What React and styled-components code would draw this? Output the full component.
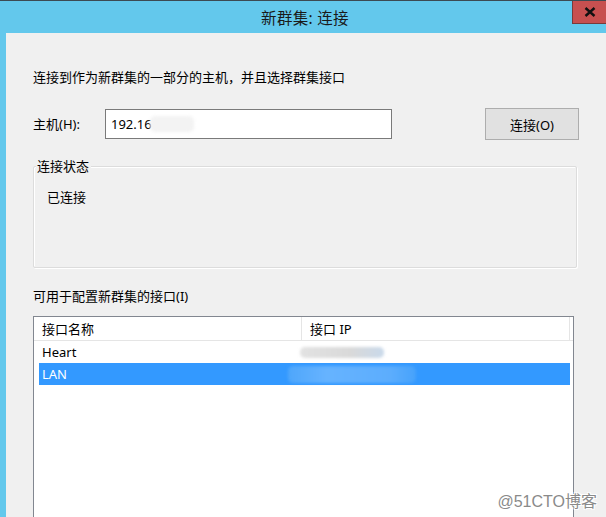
import React from 'react'
import styled, { createGlobalStyle } from 'styled-components'

const GlobalStyle = createGlobalStyle`
  html, body {
    margin: 0;
    padding: 0;
    background: #f0f0f0;
    overflow: hidden;
  }
  body {
    font-family: "Noto Sans", "Noto Sans CJK SC", sans-serif;
    font-size: 13px;
    color: #000;
  }
`

const Window = styled.div`
  width: 606px;
  height: 517px;
  display: flex;
  flex-direction: column;
  background: #63c8ec;
  border-top: 1px solid #3c4a52;
  box-sizing: border-box;
  overflow: hidden;
`

const TitleBar = styled.div`
  position: relative;
  height: 32px;
  flex-shrink: 0;
  display: flex;
  align-items: center;
  justify-content: center;
  padding-left: 4px;
  font-size: 15.5px;
  color: #1a1a1a;
  letter-spacing: 0.3px;
`

const CloseButton = styled.div`
  position: absolute;
  top: -1px;
  right: 0;
  width: 34px;
  height: 24px;
  background: #c75050;
  border-left: 1px solid #7a3a3a;
  border-bottom: 1px solid #7a3a3a;
  box-sizing: border-box;
  display: flex;
  align-items: center;
  justify-content: center;
`

const Body = styled.div`
  flex: 1;
  min-height: 0;
  overflow: hidden;
  margin-left: 6px;
  background: #f0f0f0;
  padding: 0 29px 0 27px;
  display: flex;
  flex-direction: column;
  position: relative;
`

const Line = styled.div`
  line-height: 18px;
  margin-top: ${p => p.$top}px;
  white-space: nowrap;
  flex-shrink: 0;
`

const HostRow = styled.div`
  display: flex;
  align-items: center;
  height: 32px;
  margin-top: 22px;
  flex-shrink: 0;
`

const HostLabel = styled.div`
  width: 72px;
  line-height: 18px;
`

const Input = styled.div`
  width: 287px;
  height: 30px;
  box-sizing: border-box;
  border: 1px solid #7a7a7a;
  background: #fff;
  display: flex;
  align-items: center;
  padding-left: 5px;
`

const Blur = styled.span`
  display: inline-block;
  width: ${p => p.$w}px;
  height: ${p => p.$h}px;
  margin-left: ${p => p.$ml || 0}px;
  border-radius: 5px;
  background: ${p => p.$bg};
  filter: blur(1.5px);
`

const Button = styled.div`
  margin-left: auto;
  margin-right: -2px;
  width: 94px;
  height: 32px;
  box-sizing: border-box;
  background: #e1e1e1;
  border: 1px solid #adadad;
  display: flex;
  align-items: center;
  justify-content: center;
`

const GroupBox = styled.div`
  position: relative;
  flex-shrink: 0;
  margin-top: 26px;
  height: 102px;
  box-sizing: border-box;
  border: 1px solid #dcdcdc;
  box-shadow: inset 1px 1px 0 #fff, 1px 1px 0 #fff;
  border-radius: 2px;
  padding: 21px 0 0 13px;
  line-height: 18px;
`

const Legend = styled.span`
  position: absolute;
  top: -10px;
  left: 2px;
  padding: 0 2px 0 1px;
  background: #f0f0f0;
  line-height: 18px;
`

const ListView = styled.div`
  margin-top: 11px;
  width: 541px;
  height: 215px;
  flex-shrink: 0;
  box-sizing: border-box;
  border: 1px solid #828790;
  background: #fff;
`

const Header = styled.div`
  display: grid;
  grid-template-columns: 268px 268px;
  height: 24px;
  border-bottom: 1px solid #e5e5e5;
  box-sizing: border-box;
`

const HeaderCell = styled.div`
  display: flex;
  align-items: center;
  padding-left: 8px;
  border-right: 1px solid #e5e5e5;
  line-height: 18px;
`

const Rows = styled.div`
  padding: 0 3px 0 5px;
  display: flex;
  flex-direction: column;
`

const Row = styled.div`
  display: grid;
  grid-template-columns: 263px 1fr;
  height: 22px;
  align-items: center;
  background: ${p => (p.$selected ? '#3399ff' : 'transparent')};
  color: ${p => (p.$selected ? '#fff' : '#000')};
`

const NameCell = styled.div`
  padding-left: 3px;
  line-height: 18px;
`

const IpCell = styled.div`
  display: flex;
  align-items: center;
`

const Watermark = styled.div`
  position: absolute;
  right: 9px;
  bottom: 5px;
  font-size: 16px;
  line-height: 20px;
  color: #8a8a8a;
  text-shadow: 1px 1px 0 #fff, -1px -1px 0 #fff, 1px -1px 0 #fff, -1px 1px 0 #fff;
  font-family: "Liberation Sans", "Noto Sans CJK SC", sans-serif;
`

export default function App() {
  return (
    <>
      <GlobalStyle />
      <Window>
        <TitleBar>
          新群集: 连接
          <CloseButton>
            <svg width="12" height="10" viewBox="0 0 12 10">
              <path d="M1.5 1 L10.5 9 M10.5 1 L1.5 9" stroke="#111" strokeWidth="2.4" />
            </svg>
          </CloseButton>
        </TitleBar>
        <Body>
          <Line $top={35}>连接到作为新群集的一部分的主机，并且选择群集接口</Line>
          <HostRow>
            <HostLabel>主机(H):</HostLabel>
            <Input>
              192.16
              <Blur $w={44} $h={16} $ml={-2} $bg="#f3f3f3" />
            </Input>
            <Button>连接(O)</Button>
          </HostRow>
          <GroupBox>
            <Legend>连接状态</Legend>
            已连接
          </GroupBox>
          <Line $top={19}>可用于配置新群集的接口(I)</Line>
          <ListView>
            <Header>
              <HeaderCell>接口名称</HeaderCell>
              <HeaderCell>接口 IP</HeaderCell>
            </Header>
            <Rows>
              <Row>
                <NameCell>Heart</NameCell>
                <IpCell>
                  <Blur $w={84} $h={11} $ml={-2} $bg="linear-gradient(90deg, #e2e2e2, #d9d9d9 60%, #c9d9ea)" />
                </IpCell>
              </Row>
              <Row $selected>
                <NameCell>LAN</NameCell>
                <IpCell>
                  <Blur $w={128} $h={17} $ml={-14} $bg="linear-gradient(90deg, #4ea6fb, #66b3ff 30%, #5cadfd 80%, #46a2fb)" />
                </IpCell>
              </Row>
            </Rows>
          </ListView>
          <Watermark>@51CTO博客</Watermark>
        </Body>
      </Window>
    </>
  )
}
